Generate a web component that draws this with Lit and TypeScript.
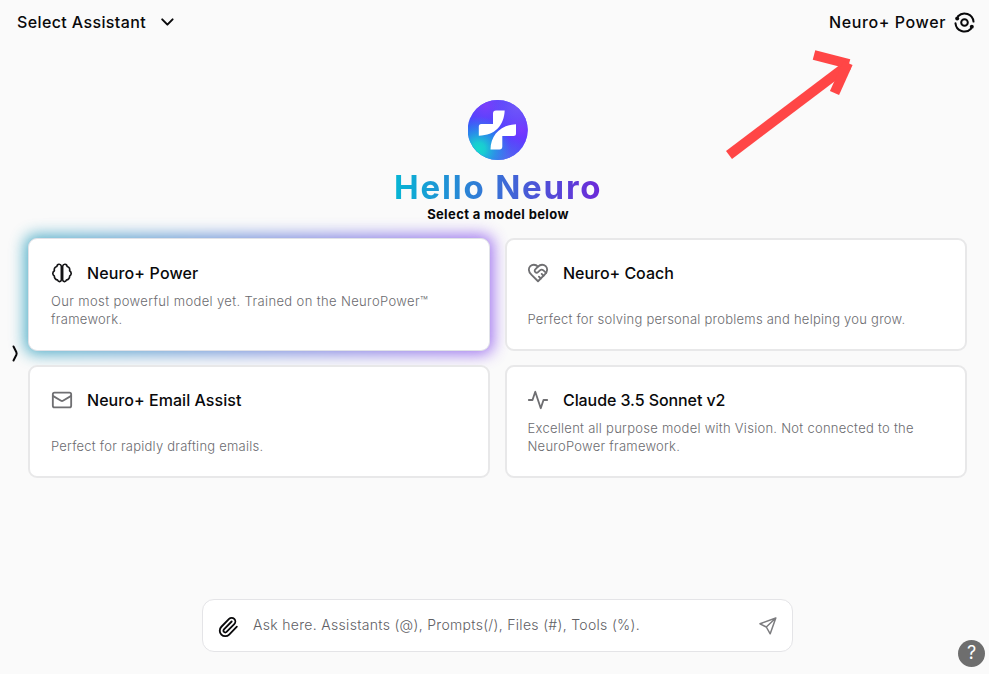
import { LitElement, html, css, svg } from "lit";
import { customElement, property } from "lit/decorators.js";
import { classMap } from "lit/directives/class-map.js";
import { styleMap } from "lit/directives/style-map.js";

interface Line { text: string; spacing: number; }
interface Model { icon: string; title: Line; lines: Line[]; active?: boolean; }

const models: Model[] = [
  {
    icon: "brain",
    active: true,
    title: { text: "Neuro+ Power", spacing: 0.14 },
    lines: [
      { text: "Our most powerful model yet. Trained on the NeuroPower™", spacing: 0.37 },
      { text: "framework.", spacing: 0.3 },
    ],
  },
  {
    icon: "heart",
    title: { text: "Neuro+ Coach", spacing: -0.03 },
    lines: [{ text: "Perfect for solving personal problems and helping you grow.", spacing: 0.24 }],
  },
  {
    icon: "mail",
    title: { text: "Neuro+ Email Assist", spacing: 0.05 },
    lines: [{ text: "Perfect for rapidly drafting emails.", spacing: 0.23 }],
  },
  {
    icon: "pulse",
    title: { text: "Claude 3.5 Sonnet v2", spacing: -0.08 },
    lines: [
      { text: "Excellent all purpose model with Vision. Not connected to the", spacing: 0.27 },
      { text: "NeuroPower framework.", spacing: 0.25 },
    ],
  },
];

const glyphs: Record<string, unknown> = {
  brain: svg`
    <path d="M11.300 4.600C10.600 1.600 6.700 1.900 6.400 4.900C3.900 5.400 3.200 7.700 3.700 9.500C1.300 11 1.500 14 3.600 15.200C3.600 18 5.600 19.600 7 19.400C8 22.300 10.900 21.800 11.300 19.600Z"/>
    <path d="M12.700 4.600C13.400 1.600 17.300 1.900 17.600 4.900C20.100 5.400 20.800 7.700 20.300 9.500C22.700 11 22.500 14 20.400 15.200C20.400 18 18.400 19.600 17 19.400C16 22.300 13.100 21.800 12.700 19.600Z"/>`,
  heart: svg`
    <path d="M19 14c1.490-1.460 3-3.210 3-5.500A5.500 5.500 0 0 0 16.500 3c-1.760 0-3 .5-4.500 2-1.500-1.500-2.740-2-4.500-2A5.500 5.500 0 0 0 2 8.500c0 2.300 1.500 4.050 3 5.500l7 7Z"/>
    <path d="M12 5 9.040 7.960a2.170 2.170 0 0 0 0 3.080c.82.820 2.130.850 3 .070l2.070-1.900a2.820 2.820 0 0 1 3.790 0l2.960 2.660"/>
    <path d="m18 15-2-2"/><path d="m15 18-2-2"/>`,
  mail: svg`<rect x="2" y="4" width="20" height="16" rx="1.800"/><path d="m2 7.500 9 5.300a2 2 0 0 0 2 0l9-5.300"/>`,
  pulse: svg`<path d="M22 12h-4l-3 9L9 3l-3 9H2"/>`,
};

@customElement("model-card")
export class ModelCard extends LitElement {
  @property({ attribute: false }) model!: Model;

  static styles = css`
    :host { display: block; position: relative; height: 113px; }
    .glow {
      position: absolute;
      inset: -3px;
      border-radius: 10px;
      background: linear-gradient(90deg, #0891b2, #7c3aed);
      filter: blur(8px);
      opacity: 0.72;
    }
    .card {
      position: relative;
      box-sizing: border-box;
      height: 100%;
      display: flex;
      flex-direction: column;
      justify-content: space-between;
      padding: 22px 21px 21px;
      border: 2px solid #e8e8e9;
      border-radius: 9px;
      background: #fff;
    }
    :host(:nth-child(even)) .card { padding-left: 20px; }
    :host(:nth-child(even)) .desc { padding-left: 0.5px; }
    .card.active { border: 1px solid #e0e2e8; padding: 23px 22px 22px; }
    .head { display: flex; align-items: center; gap: 14px; height: 22px; }
    svg {
      width: 22px;
      height: 22px;
      fill: none;
      stroke: #6f6f72;
      stroke-width: 2;
      stroke-linecap: round;
      stroke-linejoin: round;
    }
    .active svg { stroke: #141416; stroke-width: 1.8; }
    .title { font-size: 16px; font-weight: 500; line-height: 20px; white-space: nowrap; padding-bottom: 1px; }
    .desc { font-size: 13px; font-weight: 300; line-height: 18px; color: #6b6b6f; white-space: nowrap; }
  `;

  render() {
    const { icon, title, lines, active } = this.model;
    return html`
      ${active ? html`<div class="glow"></div>` : ""}
      <div class=${classMap({ card: true, active: !!active })}>
        <div class="head">
          <svg viewBox="0 0 24 24">${glyphs[icon]}</svg>
          <span class="title" style=${styleMap({ letterSpacing: `${title.spacing}px` })}>${title.text}</span>
        </div>
        <div>
          ${lines.map((l) => html`<div class="desc" style=${styleMap({ letterSpacing: `${l.spacing}px` })}>${l.text}</div>`)}
        </div>
      </div>
    `;
  }
}

@customElement("app-root")
export class AppRoot extends LitElement {
  static styles = css`
    :host {
      display: flex;
      flex-direction: column;
      position: relative;
      height: 674px;
      overflow: hidden;
      background: #fafafa;
      color: #09090b;
      font-family: Inter, "Open Sans", sans-serif;
    }
    * { box-sizing: border-box; }
    .bar {
      display: flex;
      justify-content: space-between;
      align-items: center;
      flex: none;
      height: 44px;
      padding: 0 14px 0 17px;
      font-size: 16px;
      font-weight: 500;
    }
    .pick { display: flex; align-items: center; gap: 13px; letter-spacing: 0.38px; }
    .current { display: flex; align-items: center; gap: 7px; letter-spacing: 0.6px; }
    .line { fill: none; stroke: currentColor; stroke-width: 2; stroke-linecap: round; stroke-linejoin: round; }
    .dot { fill: currentColor; stroke: none; }
    .hero { display: flex; flex-direction: column; align-items: center; padding: 56px 0 0 6px; }
    h1 {
      margin: 7px 0 0;
      padding-left: 1.5px;
      font-size: 33px;
      line-height: 40px;
      font-weight: 700;
      letter-spacing: 1.8px;
      color: transparent;
      background: linear-gradient(90deg, #06b6d4, #6d28d9);
      background-clip: text;
      -webkit-background-clip: text;
    }
    .sub { font-size: 13px; line-height: 15px; font-weight: 700; letter-spacing: 0.37px; padding-left: 1px; }
    .grid { display: grid; grid-template-columns: 462px 462px; gap: 14px 15px; margin: 16px 0 0 28px; }
    .grid model-card:first-child { z-index: 0; }
    .grid model-card { z-index: 1; }
    .ask {
      display: flex;
      align-items: center;
      width: 591px;
      height: 53px;
      margin: auto 0 22px 202px;
      padding: 0 14px 0 14px;
      border: 1px solid #e4e4e7;
      border-radius: 12px;
      background: #fff;
    }
    .clip { margin-top: 2px; }
    .placeholder { flex: 1; margin: 0 0 2px 14px; font-size: 14px; font-weight: 300; letter-spacing: 0.31px; color: #606064; }
    .send { color: #7c7c7f; stroke-width: 1.5; }
    .expand { position: absolute; left: 11px; top: 344px; }
    .help {
      position: absolute;
      left: 958px;
      top: 640px;
      width: 27px;
      height: 27px;
      border-radius: 50%;
      background: #6e6e6e;
      color: #fff;
      font-size: 18px;
      line-height: 26px;
      text-align: center;
    }
    .pointer { position: absolute; left: 720px; top: 40px; fill: none; stroke: #ff4646; stroke-width: 10; }
  `;

  render() {
    return html`
      <div class="bar">
        <div class="pick">
          <span>Select Assistant</span>
          <svg class="line" width="16" height="16" viewBox="0 0 16 16"><path d="M3.200 5.400l5.200 5.200 5.200-5.200"/></svg>
        </div>
        <div class="current">
          <span>Neuro+ Power</span>
          <svg class="line" width="22" height="22" viewBox="0 0 22 22">
            <circle cx="11.500" cy="11.500" r="3.300"/>
            <path d="M5 5.300A9 9 0 0 1 20.500 10.600"/>
            <path d="M2.500 12.300A9 9 0 0 0 18 17.700"/>
            <circle class="dot" cx="4.200" cy="7.400" r="2"/>
            <circle class="dot" cx="18.800" cy="15.800" r="2"/>
          </svg>
        </div>
      </div>

      <div class="hero">
        <svg width="60" height="60" viewBox="0 0 60 60">
          <defs>
            <radialGradient id="violet" cx="0.9" cy="0.5" r="0.5"><stop offset="0" stop-color="#7a35ff"/><stop offset="1" stop-color="#7a35ff" stop-opacity="0"/></radialGradient>
            <radialGradient id="top" cx="0.3" cy="0.08" r="0.5"><stop offset="0" stop-color="#7c3ffa"/><stop offset="1" stop-color="#7c3ffa" stop-opacity="0"/></radialGradient>
            <radialGradient id="haze" cx="0.82" cy="0.12" r="0.45"><stop offset="0" stop-color="#7256f8"/><stop offset="1" stop-color="#7256f8" stop-opacity="0"/></radialGradient>
            <radialGradient id="base" cx="0.68" cy="1" r="0.4"><stop offset="0" stop-color="#5a66ee"/><stop offset="1" stop-color="#5a66ee" stop-opacity="0"/></radialGradient>
            <radialGradient id="teal" cx="0.18" cy="0.82" r="0.55"><stop offset="0" stop-color="#16d8cc"/><stop offset="0.2" stop-color="#1acbd2"/><stop offset="1" stop-color="#22a5e6" stop-opacity="0"/></radialGradient>
          </defs>
          <circle cx="29.700" cy="30" r="30" fill="#3a45ff"/>
          <circle cx="29.700" cy="30" r="30" fill="url(#violet)"/>
          <circle cx="29.700" cy="30" r="30" fill="url(#top)"/>
          <circle cx="29.700" cy="30" r="30" fill="url(#haze)"/>
          <circle cx="29.700" cy="30" r="30" fill="url(#base)"/>
          <circle cx="29.700" cy="30" r="30" fill="url(#teal)"/>
          <path fill="#fff" d="M36.700 10.600C36 25 27.500 35.700 10.800 35.700V26.500Q10.800 24 13.300 24H25V13.600Q25 10.600 28 10.600Z"/>
          <path fill="#fff" d="M48 24.200C32.500 25 22.700 35 22.500 49.500H31.500Q34.300 49.500 34.300 46.500V35.900H45.500Q48 35.900 48 33.400Z"/>
        </svg>
        <h1>Hello Neuro</h1>
        <div class="sub">Select a model below</div>
      </div>

      <div class="grid">${models.map((m) => html`<model-card .model=${m}></model-card>`)}</div>

      <div class="ask">
        <svg class="line clip" width="22" height="22" viewBox="0 0 24 24">
          <path d="m16 6-8.414 8.586a2 2 0 0 0 2.829 2.829l8.414-8.586a4 4 0 1 0-5.657-5.657l-8.379 8.551a6 6 0 1 0 8.485 8.485l8.379-8.551"/>
        </svg>
        <span class="placeholder">Ask here. Assistants (@), Prompts(/), Files (#), Tools (%).</span>
        <svg class="line send" width="20" height="20" viewBox="0 0 20 20">
          <path d="M17.800 2L2 7.800L8.300 11L12.200 17.800ZM17.800 2L8.300 11"/>
        </svg>
      </div>

      <svg class="expand line" width="9" height="19" viewBox="0 0 9 19"><path d="M2.500 2.500L5.300 8Q6 9.500 5.300 11L2.500 16.500"/></svg>
      <div class="help">?</div>
      <svg class="pointer" width="140" height="125" viewBox="0 0 140 125">
        <path d="M9 115L128 25"/><path d="M94 15L129 24"/><path d="M114.500 53L128 23"/>
      </svg>
    `;
  }
}
